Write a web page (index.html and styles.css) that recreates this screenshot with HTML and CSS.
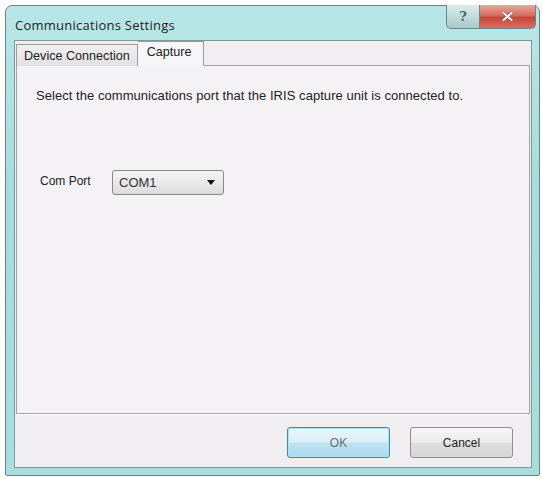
FILE: index.html
```html
<!DOCTYPE html>
<html>
<head>
<meta charset="utf-8">
<link rel="stylesheet" href="styles.css">
</head>
<body>
<div class="window">
  <div class="titlebar">
    <div class="title">Communications Settings</div>
    <div class="caption-buttons">
      <div class="cap-btn help">?</div>
      <div class="cap-btn close">
        <svg width="11" height="9" viewBox="0 0 11 9"><path d="M1.5 1 L9.5 8 M9.5 1 L1.5 8" stroke="#8a4a44" stroke-width="3.4" stroke-linecap="square"/><path d="M1.5 1 L9.5 8 M9.5 1 L1.5 8" stroke="#ffffff" stroke-width="2" stroke-linecap="square"/></svg>
      </div>
    </div>
  </div>
  <div class="client">
    <div class="tabs">
      <div class="tab">Device Connection</div>
      <div class="tab active">Capture</div>
    </div>
    <div class="panel">
      <p class="intro">Select the communications port that the IRIS capture unit is connected to.</p>
      <div class="field">
        <span class="label">Com Port</span>
        <div class="combo">
          <span class="combo-value">COM1</span>
          <span class="arrow"></span>
        </div>
      </div>
    </div>
    <div class="footer">
      <div class="btn default">OK</div>
      <div class="btn">Cancel</div>
    </div>
  </div>
</div>
</body>
</html>
```

FILE: styles.css
```css
html, body {
  margin: 0;
  padding: 0;
  background: #ffffff;
}
body {
  font-family: "Liberation Sans", Arial, sans-serif;
  color: #222;
}
.window {
  margin: 5px 0 0 5px;
  width: 535px;
  height: 471px;
  box-sizing: border-box;
  border: 1px solid #6a8486;
  border-radius: 7px 7px 2px 2px;
  background: linear-gradient(180deg, #b8e6e6 0%, #a6dcdd 40%, #a9dedf 100%);
  padding: 0 7px 7px 8px;
  display: flex;
  flex-direction: column;
}
.titlebar {
  height: 34px;
  flex: none;
  display: flex;
  justify-content: space-between;
  align-items: flex-start;
}
.title {
  font-family: "Open Sans", "Liberation Sans", sans-serif;
  font-size: 13px;
  color: #1e1e1e;
  padding-top: 10px;
  padding-left: 1px;
  letter-spacing: 0.25px;
}
.caption-buttons {
  display: flex;
  margin-top: -1px;
  margin-right: -4px;
}
.cap-btn {
  height: 24px;
  box-sizing: border-box;
  border: 1px solid #6f8687;
  border-top: none;
  display: flex;
  align-items: center;
  justify-content: center;
}
.help {
  width: 33px;
  border-radius: 0 0 0 5px;
  background: linear-gradient(180deg, #d9eded 0%, #c0dbdc 50%, #a9c9ca 100%);
  color: #4d6769;
  font-size: 13px;
  font-weight: bold;
  font-family: "DejaVu Serif", serif;
  border-right: none;
}
.close {
  width: 57px;
  border-radius: 0 0 5px 0;
  background: linear-gradient(180deg, #e7aa9f 0%, #d66d5f 45%, #c6463a 55%, #d97160 100%);
}
.client {
  flex: 1;
  background: #f1eef2;
  border: 1px solid #7c9899;
  display: flex;
  flex-direction: column;
  padding: 0 1px 0 1px;
}
.tabs {
  display: flex;
  align-items: flex-end;
  height: 25px;
  margin-bottom: -1px;
  position: relative;
  z-index: 1;
}
.tab {
  height: 22px;
  box-sizing: border-box;
  padding: 0 7px;
  border: 1px solid #9c9c9c;
  border-bottom: none;
  background: linear-gradient(180deg, #f0eff0 0%, #e1e0e2 100%);
  font-size: 12.6px;
  display: flex;
  align-items: center;
  color: #222;
}
.tab.active {
  height: 25px;
  background: #f6f5f7;
  border-left: none;
  padding: 0 11px 3px 9px;
  border-bottom: 1px solid #f6f5f7;
}
.panel {
  height: 349px;
  box-sizing: border-box;
  border: 1px solid #a3a3a3;
  background: #f4f2f5;
  padding: 22px 0 0 19px;
}
.intro {
  margin: 0;
  font-size: 13px;
  color: #222;
  letter-spacing: 0.05px;
}
.field {
  display: flex;
  align-items: center;
  margin-top: 67px;
  margin-left: 4px;
}
.label {
  font-size: 12px;
  width: 72px;
  color: #222;
  margin-top: -3px;
}
.combo {
  width: 112px;
  height: 25px;
  box-sizing: border-box;
  border: 1px solid #8a8a8a;
  border-radius: 3px;
  background: linear-gradient(180deg, #f5f5f5 0%, #e9e9e9 50%, #dcdcdc 100%);
  display: flex;
  align-items: center;
  justify-content: space-between;
  padding: 0 8px 0 6px;
}
.combo-value {
  font-size: 13px;
  color: #333;
}
.arrow {
  width: 0;
  height: 0;
  border-left: 4px solid transparent;
  border-right: 4px solid transparent;
  border-top: 5px solid #111;
}
.footer {
  flex: 1;
  display: flex;
  justify-content: flex-end;
  align-items: flex-start;
  gap: 20px;
  padding: 12px 17px 0 0;
  border-top: 1px solid #ffffff;
}
.btn {
  width: 103px;
  height: 31px;
  box-sizing: border-box;
  border: 1px solid #8f8f8f;
  border-radius: 3px;
  background: linear-gradient(180deg, #f6f6f6 0%, #ececec 48%, #dedede 52%, #d6d6d6 100%);
  font-size: 12px;
  display: flex;
  align-items: center;
  justify-content: center;
  color: #222;
}
.btn.default {
  border-color: #3a8ea8;
  box-shadow: inset 0 0 0 1px #a9e4f2;
  background: linear-gradient(180deg, #eaf6fb 0%, #d9eff8 48%, #bfe3f2 52%, #a9d9ee 100%);
  color: #6a6a6a;
}
```
